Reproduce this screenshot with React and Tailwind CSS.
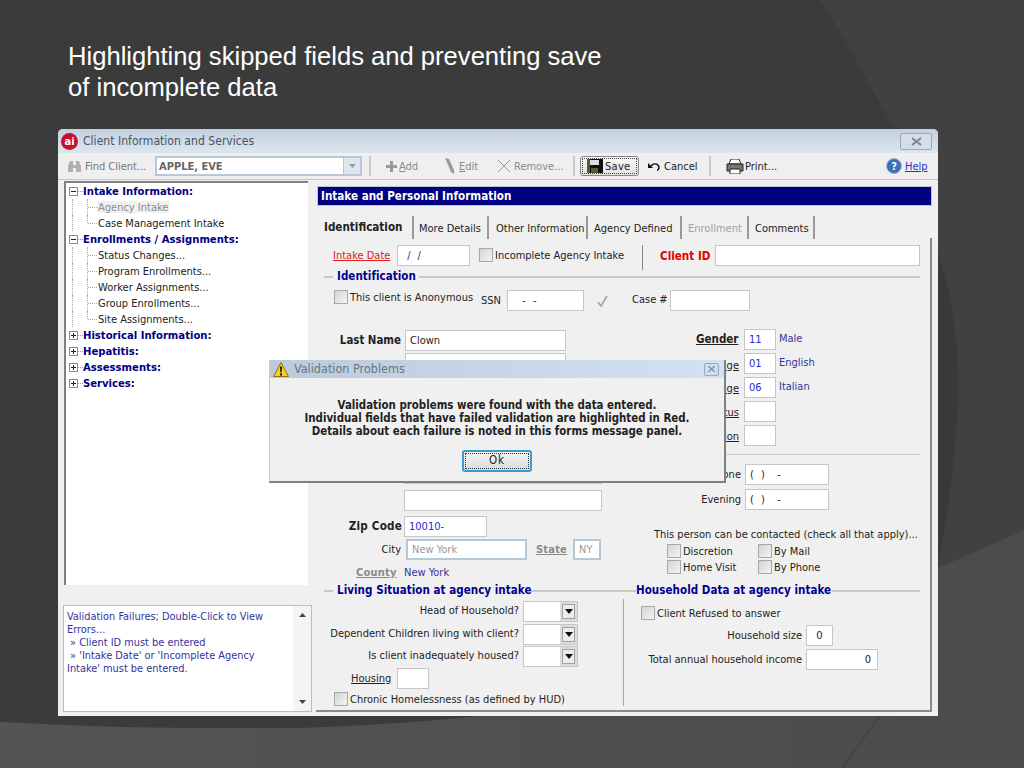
import React from "react";

const Inp = ({ className = "", children }) => (
  <div className={"h-[21px] shrink-0 flex items-center bg-white border border-[#c6c6c6] px-[4px] whitespace-nowrap " + className}>{children}</div>
);
const Chk = ({ className = "" }) => (
  <span className={"inline-block w-[14px] h-[14px] shrink-0 border border-[#a8a8a8] bg-gradient-to-br from-[#d4d4d4] to-[#f4f4f4] " + className} />
);
const Select = () => (
  <div className="flex h-[21px] w-[55px] shrink-0 bg-[#dcdcdc] border border-[#c6c6c6]">
    <div className="w-[36px] bg-white" />
    <div className="flex-1 m-[2px] flex items-center justify-center bg-[#ececec] border border-[#a0a0a0]">
      <svg width="8" height="5" viewBox="0 0 8 5"><path d="M0 0h8L4 5z" fill="#111" /></svg>
    </div>
  </div>
);
const Box = ({ open }) => (
  <svg width="9" height="9" viewBox="0 0 9 9" className="shrink-0">
    <rect x=".5" y=".5" width="8" height="8" fill="#fff" stroke="#8a8a8a" />
    <path d={open ? "M2 4.5h5" : "M2 4.5h5M4.5 2v5"} stroke="#222" />
  </svg>
);
const Head = ({ children, open }) => (
  <div className="h-[16px] flex items-center">
    <Box open={open} />
    <span className="w-[5px] border-t border-dotted border-[#999]" />
    <span className="pt-[1px] font-bold text-[#00007f] text-[11.2px]">{children}</span>
  </div>
);
const Child = ({ children, last, selected }) => (
  <div className="h-[16px] flex">
    <span className="w-[4px] h-full border-r border-dotted border-[#aaa]" />
    <span className={"ml-[14px] w-[1px] border-l border-dotted border-[#aaa] " + (last ? "h-[8px]" : "h-full")} />
    <div className="flex items-center">
      <span className="w-[9px] border-t border-dotted border-[#aaa]" />
      <span className={selected ? "px-[1px] pt-[1px] bg-[#f0f0f0] text-[#8c8c8c]" : "px-[1px] pt-[1px] text-[#222]"}>{children}</span>
    </div>
  </div>
);
const Sep = () => <span className="block w-[2px] h-[20px] bg-[#c8c8c8] shrink-0" />;
const TabSep = () => <span className="w-[2px] h-[23px] bg-[#9a9a9a] shrink-0" />;
const Sec = ({ children }) => <span className="font-bold text-[#000090] text-[11.5px] tracking-[0.05px] whitespace-nowrap">{children}</span>;
const Line = ({ className = "" }) => <span className={"h-[2px] bg-[#c8c8c8] shrink-0 " + className} />;
const Und = ({ children, className = "" }) => <span className={"underline whitespace-nowrap " + className}>{children}</span>;

export default function App() {
  return (
    <div className="relative w-[1024px] h-[768px] overflow-hidden bg-[#3c3c3c] font-['DejaVu_Sans_Condensed','Noto_Sans',sans-serif] text-[11px] leading-none text-[#222]">
      <svg className="absolute inset-0" width="1024" height="768" viewBox="0 0 1024 768">
        <defs>
          <linearGradient id="bot" x1="0" y1="0" x2="1" y2="0">
            <stop offset="0" stopColor="#545454" />
            <stop offset="1" stopColor="#4b4b4b" />
          </linearGradient>
        </defs>
        <rect width="1024" height="768" fill="#3b3b3b" />
        <path d="M820 0C860 60 880 110 897 129L938 253V568L1024 530V0z" fill="#414141" />
        <path d="M938 253C955 300 962 380 957 420C953 480 945 530 938 568z" fill="#393939" />
        <path d="M0 722C60 725 130 728 200 728H300C360 726 420 722 480 716H938V568L1024 530V768H0z" fill="url(#bot)" />
        <path d="M880 716L842 768" stroke="#454545" strokeWidth="2" fill="none" />
      </svg>

      <div className="relative">
        <h1 className="pt-[41px] pl-[68px] h-[129px] font-['Liberation_Sans',sans-serif] font-normal text-[25.6px] leading-[31px] text-white">
          Highlighting skipped fields and preventing save<br />of incomplete data
        </h1>

        <div className="relative ml-[58px] w-[880px] h-[587px] bg-[#f0f0f0] rounded-t-[5px] overflow-hidden">
          {/* title bar */}
          <div className="h-[24px] flex items-center pl-[3px] pr-[6px] bg-gradient-to-b from-[#c2d0de] to-[#dde6ef]">
            <div className="w-[17px] h-[17px] rounded-full bg-[#c8102e] flex items-center justify-center text-white font-bold text-[11px]">ai</div>
            <span className="ml-[5px] text-[#4a5560] text-[12.1px]">Client Information and Services</span>
            <div className="ml-auto mt-[1px] w-[32px] h-[17px] flex items-center justify-center border border-[#9aaaba] rounded-[2px] bg-[#d3dee9]">
              <svg width="11" height="9" viewBox="0 0 11 9"><path d="M1 1l9 7M10 1L1 8" stroke="#7a8590" strokeWidth="2" /></svg>
            </div>
          </div>

          {/* toolbar */}
          <div className="h-[27px] flex items-center pl-[9px] border-b border-[#c4c4c4] bg-[#efefef] text-[#9a9a9a]">
            <svg width="15" height="13" viewBox="0 0 15 13" className="shrink-0"><path d="M1 12V6l2-5h3v4h3V1h3l2 5v6H9V8H6v4z" fill="#b0b0b0" /></svg>
            <span className="ml-[3px] w-[60px] text-[#777] whitespace-nowrap">Find Client...</span>
            <div className="ml-[10px] w-[207px] h-[20px] flex items-center bg-white border-2 border-[#b8c8d8] pl-[2px]">
              <span className="font-bold text-[#666] text-[11px] pt-[1px]">APPLE, EVE</span>
              <span className="ml-auto w-[17px] h-full flex items-center justify-center bg-[#dfe5ec] border-l border-[#b8c8d8]">
                <svg width="7" height="4" viewBox="0 0 7 4"><path d="M0 0h7L3.500 4z" fill="#999" /></svg>
              </span>
            </div>
            <span className="ml-[7px]"><Sep /></span>
            <svg width="11" height="11" viewBox="0 0 11 11" className="ml-[15px] shrink-0"><path d="M4 0h3v4h4v3H7v4H4V7H0V4h4z" fill="#9a9a9a" /></svg>
            <span className="ml-[2px] w-[22px] text-[#8a8a8a]"><span className="underline">A</span>dd</span>
            <svg width="11" height="16" viewBox="0 0 11 16" className="ml-[23px] shrink-0"><path d="M1 0l4 1 5 11v4L7 14z" fill="#9a9a9a" /></svg>
            <span className="ml-[4px] w-[18px] text-[#8a8a8a]"><span className="underline">E</span>dit</span>
            <svg width="14" height="14" viewBox="0 0 14 14" className="ml-[20px] shrink-0"><path d="M1 1l12 12M13 1L1 13" stroke="#999" fill="none" /></svg>
            <span className="ml-[3px] w-[52px] text-[#8a8a8a]">Remove...</span>
            <span className="ml-[7px]"><Sep /></span>
            <div className="ml-[5px] w-[59px] h-[20px] flex items-center border border-[#888] rounded-[3px] bg-gradient-to-b from-[#f8f8f8] to-[#e2e2e2] outline-1 outline-dotted -outline-offset-3 outline-[#444] pl-[6px] text-[#222]">
              <svg width="16" height="14" viewBox="0 0 16 14" className="shrink-0"><path d="M0 0h16v14H0z" fill="#111" /><path d="M3 1h9v5H3z" fill="#ddd" /><path d="M4 9h7v5H4z" fill="#5a5a3a" /><path d="M0 0h3v14H0z" fill="#5a5a20" /></svg>
              <span className="ml-[2px] tracking-[0.3px]">Save</span>
            </div>
            <svg width="12" height="9" viewBox="0 0 12 9" className="ml-[9px] shrink-0"><path d="M3 4C5 1 10 1 11 5c0 2-1 3-2 3" stroke="#111" strokeWidth="1.400" fill="none" /><path d="M0 1l5 5H0z" fill="#111" /></svg>
            <span className="ml-[4px] w-[35px] text-[#222]">Cancel</span>
            <span className="ml-[10px]"><Sep /></span>
            <svg width="18" height="15" viewBox="0 0 18 15" className="ml-[15px] shrink-0"><path d="M5 0h8l2 5H3z" fill="#fff" stroke="#222" /><path d="M1 5h16v7H1z" fill="#777" stroke="#222" /><path d="M4 10h10v5H4z" fill="#fff" stroke="#222" /></svg>
            <span className="w-[32px] text-[#222] ml-[1px]">Print...</span>
            <svg width="16" height="16" viewBox="0 0 16 16" className="ml-[109px] shrink-0"><circle cx="8" cy="8" r="7.500" fill="#3f6fb8" stroke="#9cb7dc" /><text x="8" y="12" textAnchor="middle" fontSize="11" fontWeight="bold" fill="#fff">?</text></svg>
            <span className="ml-[3px] text-[#1a35c8] underline">Help</span>
          </div>

          {/* body */}
          <div className="flex">
            {/* left */}
            <div className="w-[258px] pl-[5px] pt-[1px]">
              <div className="ml-[1px] w-[244px] h-[404px] bg-white border-l-2 border-t-2 border-[#808080] pl-[3px] text-[11px]">
                <Head open>Intake Information:</Head>
                <Child selected>Agency Intake</Child>
                <Child last>Case Management Intake</Child>
                <Head open>Enrollments / Assignments:</Head>
                <Child>Status Changes...</Child>
                <Child>Program Enrollments...</Child>
                <Child>Worker Assignments...</Child>
                <Child>Group Enrollments...</Child>
                <Child last>Site Assignments...</Child>
                <Head>Historical Information:</Head>
                <Head>Hepatitis:</Head>
                <Head>Assessments:</Head>
                <Head>Services:</Head>
              </div>
              <div className="mt-[20px] w-[249px] h-[107px] bg-white border border-[#bcbcbc] flex text-[#333399] text-[10.9px] leading-[13px]">
                <div className="flex-1 pl-[3px] pt-[4px] whitespace-nowrap">
                  <div>Validation Failures; Double-Click to View</div>
                  <div>Errors...</div>
                  <div>&nbsp;» Client ID must be entered</div>
                  <div>&nbsp;» 'Intake Date' or 'Incomplete Agency</div>
                  <div>Intake' must be entered.</div>
                </div>
                <div className="w-[18px] bg-[#f4f4f4] flex flex-col items-center justify-between py-[7px]">
                  <svg width="7" height="4" viewBox="0 0 7 4"><path d="M0 4h7L3.500 0z" fill="#444" /></svg>
                  <svg width="7" height="4" viewBox="0 0 7 4"><path d="M0 0h7L3.500 4z" fill="#444" /></svg>
                </div>
              </div>
            </div>

            {/* right */}
            <div className="w-[616px] h-[532px] border-b-2 border-[#8a8a8a] text-[11px]">
              <div className="h-[26px] pt-[6px] pl-[1px]">
                <div className="h-[20px] border border-[#b8c8d8] bg-[#000080] flex items-center pl-[3px] pt-[1px] text-white font-bold text-[11.6px]">Intake and Personal Information</div>
              </div>
              {/* tabs */}
              <div className="h-[32px] pt-[10px] flex items-start pl-[8px] whitespace-nowrap">
                <span className="font-bold w-[88px] pt-[6px] text-[11.6px]">Identification</span><TabSep />
                <span className="w-[73px] pl-[5px] pt-[7px]">More Details</span><TabSep />
                <span className="w-[97px] pl-[7px] pt-[7px]">Other Information</span><TabSep />
                <span className="w-[92px] pl-[6px] pt-[7px]">Agency Defined</span><TabSep />
                <span className="w-[65px] pl-[6px] pt-[7px] text-[#a0a0a0]">Enrollment</span><TabSep />
                <span className="w-[64px] pl-[6px] pt-[7px]">Comments</span><TabSep />
              </div>

              <div className="h-[474px] border-r-2 border-[#8a8a8a] flex flex-col">
                {/* row 1 */}
                <div className="flex items-start h-[32px] pt-[7px] pl-[17px]">
                  <Und className="w-[58px] mt-[5px] text-[#e02020]">Intake Date</Und>
                  <Inp className="ml-[6px] w-[73px] text-[#333] tracking-[2px]">&nbsp;/ /</Inp>
                  <Chk className="ml-[9px] mt-[3px]" />
                  <span className="ml-[2px] w-[131px] mt-[5px] whitespace-nowrap">Incomplete Agency Intake</span>
                  <span className="ml-[16px] w-[1px] h-[25px] bg-[#888]" />
                  <span className="ml-[17px] w-[55px] mt-[6px] font-bold text-[#e00000] text-[11.6px]">Client ID</span>
                  <Inp className="w-[205px]" />
                </div>
                {/* row 2 */}
                <div className="flex items-center h-[14px] pl-[8px]">
                  <Line className="w-[9px]" />
                  <span className="ml-[4px] w-[82px]"><Sec>Identification</Sec></span>
                  <Line className="w-[501px]" />
                </div>
                {/* row 3 */}
                <div className="flex items-start h-[41px] pt-[2px] pl-[18px] mt-[4px] whitespace-nowrap">
                  <Chk />
                  <span className="ml-[2px] w-[121px] mt-[2px]">This client is Anonymous</span>
                  <span className="ml-[10px] w-[26px] mt-[5px]">SSN</span>
                  <Inp className="w-[77px] text-[#333] tracking-[2px]">&nbsp;&nbsp;- -</Inp>
                  <svg width="12" height="12" viewBox="0 0 12 12" className="ml-[13px] mt-[5px]"><path d="M1 7l3 4 6-10" stroke="#a8a8a8" strokeWidth="1.800" fill="none" /></svg>
                  <span className="ml-[23px] w-[38px] mt-[4px]">Case #</span>
                  <Inp className="w-[80px]" />
                </div>

                {/* middle */}
                <div className="flex h-[254px]">
                  <div className="w-[324px] flex flex-col">
                    <div className="flex items-center mt-[1px]">
                      <span className="w-[85px] text-right font-bold text-[11.4px]">Last Name</span>
                      <Inp className="ml-[4px] w-[161px]">Clown</Inp>
                    </div>
                    <Inp className="ml-[89px] mt-[2px] w-[161px]" />
                    <Inp className="ml-[88px] mt-[89px] w-[198px]" />
                    <Inp className="ml-[88px] mt-[6px] w-[198px]" />
                    <div className="flex items-center mt-[5px]">
                      <span className="w-[86px] text-right font-bold text-[11.6px] tracking-[0.2px]">Zip Code</span>
                      <Inp className="ml-[2px] w-[83px] text-[#2a2ad0]">10010-</Inp>
                    </div>
                    <div className="flex items-center mt-[2px]">
                      <span className="w-[85px] text-right">City</span>
                      <Inp className="ml-[5px] w-[121px] !border-[#b4c8d8] border-2 text-[#9a9a9a]">New York</Inp>
                      <Und className="ml-[9px] w-[31px] font-bold text-[#8a8a8a] tracking-[0.2px]">State</Und>
                      <Inp className="ml-[6px] w-[28px] !border-[#b4c8d8] border-2 text-[#9a9a9a]">NY</Inp>
                    </div>
                    <div className="flex items-center mt-[7px]">
                      <Und className="ml-[40px] w-[48px] font-bold text-[#8a8a8a] tracking-[0.2px]">County</Und>
                      <span className="text-[#333399]">New York</span>
                    </div>
                  </div>
                  <div className="flex-1 flex flex-col">
                    <div className="flex items-center h-[21px]">
                      <Und className="ml-[56px] w-[48px] font-bold text-[11.5px]">Gender</Und>
                      <Inp className="w-[32px] text-[#2a2ad0]">11</Inp>
                      <span className="ml-[3px] -mt-[3px] text-[#333399]">Male</span>
                    </div>
                    <div className="flex items-center h-[21px] mt-[3px]">
                      <Und className="w-[99px] mt-[4px] text-right">Language</Und>
                      <Inp className="ml-[5px] w-[32px] text-[#2a2ad0]">01</Inp>
                      <span className="ml-[3px] -mt-[3px] text-[#333399]">English</span>
                    </div>
                    <div className="flex items-center h-[21px] mt-[3px]">
                      <Und className="w-[99px] mt-[2px] text-right">Language</Und>
                      <Inp className="ml-[5px] w-[32px] text-[#2a2ad0]">06</Inp>
                      <span className="ml-[3px] -mt-[3px] text-[#333399]">Italian</span>
                    </div>
                    <div className="flex items-center h-[21px] mt-[3px]">
                      <Und className="w-[99px] mt-[2px] text-right">Status</Und>
                      <Inp className="ml-[5px] w-[32px]" />
                    </div>
                    <div className="flex items-center h-[21px] mt-[3px]">
                      <Und className="w-[99px] mt-[2px] text-right">Religion</Und>
                      <Inp className="ml-[5px] w-[32px]" />
                    </div>
                    <Line className="mt-[8px] w-[280px] !h-[1px] bg-[#a8a8a8]" />
                    <div className="flex items-center h-[21px] mt-[9px]">
                      <span className="w-[101px] text-right">Phone</span>
                      <Inp className="ml-[4px] w-[84px] tracking-[2px]">( )&nbsp;&nbsp;-</Inp>
                    </div>
                    <div className="flex items-center h-[21px] mt-[4px]">
                      <span className="w-[101px] text-right">Evening</span>
                      <Inp className="ml-[4px] w-[84px] tracking-[2px]">( )&nbsp;&nbsp;-</Inp>
                    </div>
                    <div className="ml-[14px] mt-[19px] whitespace-nowrap">This person can be contacted (check all that apply)...</div>
                    <div className="ml-[27px] mt-[4px] grid grid-cols-[91px_90px] gap-y-[2px]">
                      <div className="flex items-center"><Chk /><span className="ml-[2px]">Discretion</span></div>
                      <div className="flex items-center"><Chk /><span className="ml-[2px]">By Mail</span></div>
                      <div className="flex items-center"><Chk /><span className="ml-[2px]">Home Visit</span></div>
                      <div className="flex items-center"><Chk /><span className="ml-[2px]">By Phone</span></div>
                    </div>
                  </div>
                </div>

                {/* section */}
                <div className="flex items-center h-[16px] pl-[8px]">
                  <Line className="w-[9px]" />
                  <span className="ml-[4px] w-[194px]"><Sec>Living Situation at agency intake</Sec></span>
                  <Line className="w-[105px]" />
                  <span className="w-[196px]"><Sec>Household Data at agency intake</Sec></span>
                  <Line className="w-[88px]" />
                </div>

                {/* lower */}
                <div className="flex h-[108px]">
                  <div className="w-[308px] h-[107px] border-r border-[#a8a8a8] flex flex-col">
                    <div className="flex items-center mt-[2px]">
                      <span className="w-[203px] -mt-[2px] text-right">Head of Household?</span>
                      <span className="ml-[4px]"><Select /></span>
                    </div>
                    <div className="flex items-center mt-[2px]">
                      <span className="w-[203px] -mt-[3px] text-right whitespace-nowrap">Dependent Children living with client?</span>
                      <span className="ml-[4px]"><Select /></span>
                    </div>
                    <div className="flex items-center mt-[1px]">
                      <span className="w-[203px] -mt-[3px] text-right">Is client inadequately housed?</span>
                      <span className="ml-[4px]"><Select /></span>
                    </div>
                    <div className="flex items-center mt-[1px]">
                      <Und className="ml-[35px] w-[46px]">Housing</Und>
                      <Inp className="w-[32px]" />
                    </div>
                    <div className="flex items-center mt-[3px] pl-[18px]">
                      <Chk />
                      <span className="ml-[2px] whitespace-nowrap">Chronic Homelessness (as defined by HUD)</span>
                    </div>
                  </div>
                  <div className="flex-1 flex flex-col">
                    <div className="flex items-center mt-[7px] pl-[17px]">
                      <Chk />
                      <span className="ml-[2px]">Client Refused to answer</span>
                    </div>
                    <div className="flex items-center mt-[5px]">
                      <span className="w-[178px] text-right">Household size</span>
                      <Inp className="ml-[4px] w-[27px] justify-center">0</Inp>
                    </div>
                    <div className="flex items-center mt-[3px]">
                      <span className="w-[178px] text-right">Total annual household income</span>
                      <Inp className="ml-[4px] w-[72px] justify-end pr-[6px]">0</Inp>
                    </div>
                  </div>
                </div>
              </div>
            </div>
          </div>

          {/* dialog */}
          <div className="absolute left-[211px] top-[231px] w-[457px] h-[123px] bg-[#f0f0f0] border-r-2 border-b-2 border-[#808080] border-l border-l-[#c8c8c8]">
            <div className="h-[18px] flex items-center pl-[3px] pr-[5px] bg-gradient-to-r from-[#bccad9] to-[#d3e2f1] text-[#667788] text-[12.5px]">
              <svg width="16" height="15" viewBox="0 0 16 15" className="shrink-0"><path d="M8 .5L15.500 14.500H.5z" fill="#f5d020" stroke="#8a7010" /><path d="M7 4.500h2l-.4 6H7.400zM7 11.500h2v2H7z" fill="#111" /></svg>
              <span className="ml-[5px]">Validation Problems</span>
              <span className="ml-auto w-[15px] h-[13px] flex items-center justify-center border border-[#93aac2] rounded-[2px] bg-[#cfdeec]">
                <svg width="7" height="6" viewBox="0 0 7 6"><path d="M0 0l7 6M7 0L0 6" stroke="#7a8ea3" strokeWidth="1.300" /></svg>
              </span>
            </div>
            <div className="pt-[21px] text-center font-bold text-[11.4px] leading-[13px] text-[#222]">
              <div>Validation problems were found with the data entered.</div>
              <div>Individual fields that have failed validation are highlighted in Red.</div>
              <div>Details about each failure is noted in this forms message panel.</div>
            </div>
            <div className="mt-[12px] mx-auto w-[70px] h-[22px] flex items-center justify-center border-2 border-[#3f9ad0] rounded-[3px] bg-gradient-to-b from-[#f4f4f4] to-[#dcdcdc] outline-1 outline-dotted -outline-offset-4 outline-[#333] text-[11.5px] tracking-[1px]">
              Ok
            </div>
          </div>
        </div>
      </div>
    </div>
  );
}
